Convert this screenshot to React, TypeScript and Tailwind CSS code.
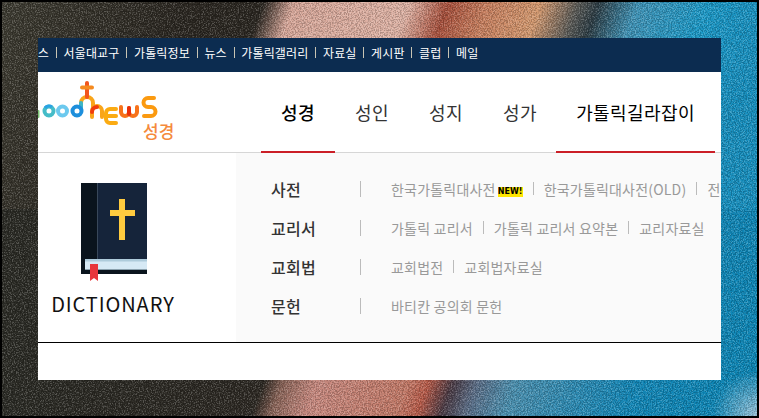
const topLinks = ["서울대교구", "가톨릭정보", "뉴스", "가톨릭갤러리", "자료실", "게시판", "클럽", "메일"];

const mainNav = [
  { label: "성경", active: true, width: "w-[74px]", gap: "", color: "font-medium text-black" },
  { label: "성인", active: false, width: "w-[74px]", gap: "", color: "text-[#333]" },
  { label: "성지", active: false, width: "w-[74px]", gap: "", color: "text-[#333]" },
  { label: "성가", active: false, width: "w-[74px]", gap: "", color: "text-[#333]" },
  { label: "가톨릭길라잡이", active: true, width: "w-[159px]", gap: "ml-[-1px]", color: "text-black" },
];

const rows = [
  { title: "사전", links: ["한국가톨릭대사전", "한국가톨릭대사전(OLD)", "전"] },
  { title: "교리서", links: ["가톨릭 교리서", "가톨릭 교리서 요약본", "교리자료실"] },
  { title: "교회법", links: ["교회법전", "교회법자료실"] },
  { title: "문헌", links: ["바티칸 공의회 문헌"] },
];

function Logo() {
  return (
    <svg width="136" height="64" viewBox="0 0 136 64" className="block shrink-0">
      {/* cross and arch */}
      <path d="M43 31v-5a6 6 0 0 1 12 0v4" fill="none" stroke="#f9a51a" strokeWidth="4" strokeLinecap="round" />
      <path d="M43 26v5" stroke="#3fb6c4" strokeWidth="4" strokeLinecap="round" />
      <path d="M49 6V20" stroke="#f2551d" strokeWidth="4" strokeLinecap="round" />
      <path d="M44 10.500H54" stroke="#f58a1f" strokeWidth="4" strokeLinecap="round" />
      {/* g o o d */}
      <path d="M0.500 34v6" stroke="#7cc576" strokeWidth="2" strokeLinecap="round" />
      <circle cx="11" cy="34" r="4.500" fill="none" stroke="#45bcc8" strokeWidth="4" />
      <path d="M7 31a5 5 0 0 1 7-1" fill="none" stroke="#2aa3e4" strokeWidth="3" />
      <circle cx="24.500" cy="34" r="4.500" fill="none" stroke="#6cc9ee" strokeWidth="4" />
      <circle cx="39" cy="34" r="4.500" fill="none" stroke="#1d8fdc" strokeWidth="4" />
      {/* n */}
      <path d="M54 40V34a5 5 0 0 1 10 0v6" fill="none" stroke="#f9a51a" strokeWidth="4" strokeLinecap="round" />
      <path d="M54 35a5 5 0 0 1 5-5" fill="none" stroke="#f13c0c" strokeWidth="4" strokeLinecap="round" />
      {/* e */}
      <path d="M78 32h-6a4 4 0 0 0-4 4v6a4 4 0 0 0 4 4h6" fill="none" stroke="#fbab12" strokeWidth="4" strokeLinecap="round" />
      <path d="M69 39h9" stroke="#fbab12" strokeWidth="4" strokeLinecap="round" />
      {/* w */}
      <path d="M83 30v5a4 4 0 0 0 8 0v-4v4a4 4 0 0 0 8 0v-5" fill="none" stroke="#f7721a" strokeWidth="4" strokeLinecap="round" strokeLinejoin="round" />
      <path d="M91 31v6" stroke="#e92f0a" strokeWidth="4" strokeLinecap="round" />
      {/* s */}
      <path d="M116 21h-6a4.500 4.500 0 0 0 0 9h3a4.500 4.500 0 0 1 0 9h-7" fill="none" stroke="#fb9a10" strokeWidth="4" strokeLinecap="round" />
    </svg>
  );
}

function BibleIcon() {
  return (
    <svg width="66" height="98" viewBox="0 0 66 98" className="block">
      <rect width="66" height="91" fill="#15243a" />
      <rect width="16" height="91" fill="#0a141d" />
      <rect x="16" width="1" height="76" fill="#39485a" />
      <rect y="76" width="66" height="15" fill="#0a141d" />
      <rect x="4" y="76" width="62" height="11" fill="#d6e9f5" />
      <rect x="4" y="76" width="62" height="2.500" fill="#aecbdb" />
      <rect x="4" y="86" width="62" height="1" fill="#8aa0ad" />
      <rect x="38" y="16" width="6" height="41" fill="#ffcb3f" />
      <rect x="29" y="27" width="25" height="6" fill="#ffcb3f" />
      <path d="M9 81h8v17l-4-3-4 3z" fill="#e8363c" />
    </svg>
  );
}

function NewBadge() {
  return (
    <span className="inline-flex h-[10px] w-[25px] items-center justify-center bg-[#ffe600] font-['DejaVu_Sans',sans-serif] text-[8px] font-bold leading-none tracking-[0px] text-black">
      NEW!
    </span>
  );
}

export default function App() {
  return (
    <div className="relative h-[418px] w-[759px] overflow-hidden border-2 border-black pl-[36px] pt-[36px] font-['Noto_Sans_CJK_KR','Noto_Sans',sans-serif] [background:radial-gradient(circle_at_100%_100%,rgba(170,205,225,0.9),rgba(170,205,225,0)_45px),linear-gradient(110deg,#3c3a30_7px,#2a2620_176px,#2a2620_246px,#d9a89a_275px,#e0b4a6_383px,#a8503c_420px,#c9805f_458px,#d59a70_507px,#5a5a56_542px,#2c3c44_561px,#3f94b8_599px,#1a99c8_665px,#1690c0_720px)_top/100%_50%_no-repeat,linear-gradient(110deg,#2a2a24_65px,#2c2822_305px,#8a6458_323px,#c98a80_356px,#c47a68_441px,#b85a48_460px,#4a3a44_483px,#5a6e88_507px,#4a90b0_542px,#1187b8_657px,#0b86b6_761px)_bottom/100%_50%_no-repeat]">
      <svg className="absolute inset-0 h-full w-full opacity-20" aria-hidden="true">
        <filter id="grain-light" x="0" y="0" width="100%" height="100%">
          <feTurbulence type="fractalNoise" baseFrequency="0.75" numOctaves="2" seed="4" />
          <feColorMatrix values="0 0 0 0 1 0 0 0 0 1 0 0 0 0 1 5 0 0 0 -2.2" />
        </filter>
        <filter id="grain-dark" x="0" y="0" width="100%" height="100%">
          <feTurbulence type="fractalNoise" baseFrequency="0.75" numOctaves="2" seed="9" />
          <feColorMatrix values="0 0 0 0 0 0 0 0 0 0 0 0 0 0 0 5 0 0 0 -2.2" />
        </filter>
        <rect width="100%" height="100%" filter="url(#grain-light)" />
        <rect width="100%" height="100%" filter="url(#grain-dark)" />
      </svg>

      <div className="relative flex h-[342px] w-[683px] flex-col overflow-hidden bg-white">
        {/* top bar */}
        <div className="flex h-[34px] shrink-0 items-center overflow-hidden bg-[#0c2c50] pb-[5px] text-[12px] leading-none tracking-[0.15px] text-white">
          <span className="ml-[-10px] w-[21px] shrink-0 text-right">스</span>
          {topLinks.map((link) => (
            <span key={link} className="flex shrink-0 items-center">
              <span className="mx-[6.750px] h-[11px] w-px bg-[#c9c5b4]" />
              <span>{link}</span>
            </span>
          ))}
        </div>

        {/* logo and main nav */}
        <div className="flex h-[81px] shrink-0 border-b border-[#d6d6d6]">
          <div className="flex w-[223px] shrink-0 items-start pt-[5px]">
            <div className="relative h-[64px] w-[142px]">
              <Logo />
              <span className="absolute left-[105px] top-[45px] text-[17px] font-medium leading-[18px] text-[#f58a3c]">성경</span>
            </div>
          </div>
          <nav className="flex h-[81px]">
            {mainNav.map((item) => (
              <div
                key={item.label}
                className={`flex h-[81px] items-center justify-center border-b-2 text-[18px] leading-none tracking-[0.4px] ${item.width} ${item.gap} ${item.color} ${
                  item.active ? "border-[#cb1f27]" : "border-transparent"
                }`}
              >
                {item.label}
              </div>
            ))}
          </nav>
        </div>

        {/* dictionary panel */}
        <div className="flex h-[190px] shrink-0 border-b border-black">
          <div className="flex w-[198px] shrink-0 flex-col items-center pt-[30px]">
            <div className="ml-[-47px]">
              <BibleIcon />
            </div>
            <div className="mr-[48px] mt-[9px] text-[20px] leading-7 tracking-[0.9px] text-[#111]">DICTIONARY</div>
          </div>
          <div className="flex min-w-0 flex-1 flex-col overflow-hidden bg-[#fafafa] pl-[35px] pt-[16px]">
            {rows.map((row) => (
              <div key={row.title} className="flex h-[39px] shrink-0 items-center whitespace-nowrap">
                <div className="w-[89px] shrink-0 text-[16px] font-medium leading-none tracking-[0.3px] text-[#333]">{row.title}</div>
                <span className="mr-[30px] h-[16px] w-px shrink-0 bg-[#bbb]" />
                <div className="flex items-center text-[14px] leading-none tracking-[0.2px] text-[#999]">
                  {row.links.map((link, i) => (
                    <span key={link} className="flex items-center">
                      {i > 0 && <span className="mx-[10px] h-[13px] w-px bg-[#bbb]" />}
                      <span>{link}</span>
                      {link === "한국가톨릭대사전" && <span className="ml-[2px]"><NewBadge /></span>}
                    </span>
                  ))}
                </div>
              </div>
            ))}
          </div>
        </div>
      </div>
    </div>
  );
}
